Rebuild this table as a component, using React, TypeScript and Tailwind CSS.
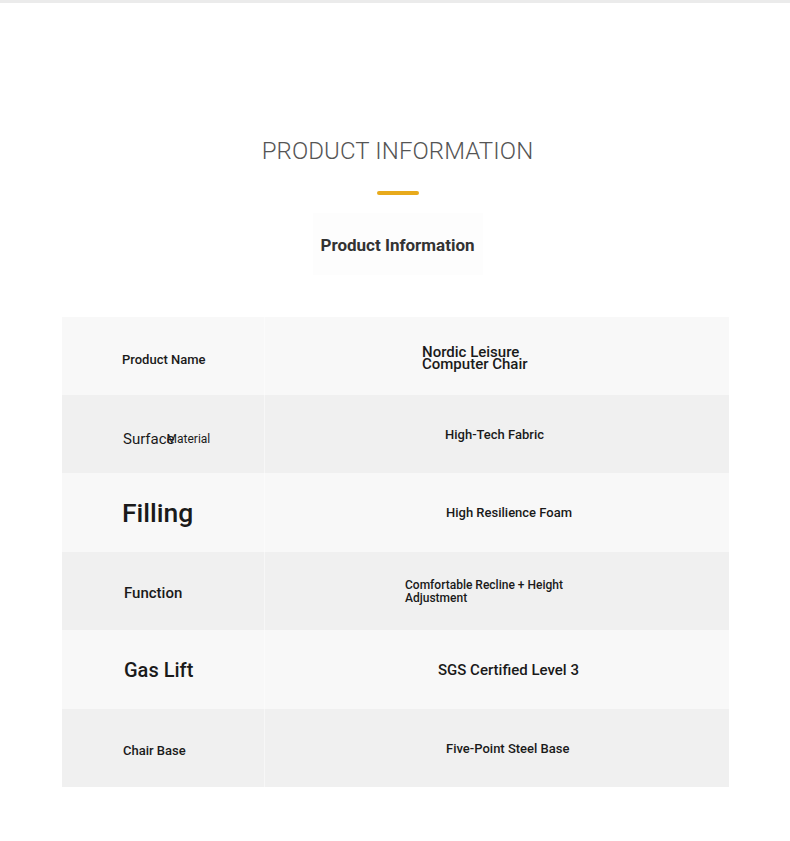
import React from "react";

export default function App() {
  return (
    <div className="w-[790px] min-h-[841px] bg-white font-['Roboto',sans-serif] text-[#222]">
      <div className="h-[3px] bg-[#ebebeb]" />
      <div className="flex flex-col items-center pt-[132px] pl-[5px]">
        <h1 className="text-[24px] leading-[32px] font-light text-[#555] tracking-[0.1px]">PRODUCT INFORMATION</h1>
        <div className="mt-[24px] h-[4px] w-[42px] rounded-full bg-[#e8aa1c]" />
        <div className="mt-[18px] w-[170px] h-[62px] flex items-center justify-center bg-[#fdfdfd] pt-[3px]">
          <span className="text-[17px] font-bold text-[#333]">Product Information</span>
        </div>
      </div>
      <div className="mt-[42px] mx-[62px] w-[667px] flex flex-col">
        {/* Row 1 */}
        <div className="flex h-[78px] bg-[#f8f8f8]">
          <div className="w-[203px] border-r border-[#fbfbfb] flex items-center pl-[60px] pt-[8px]">
            <span className="text-[13px] font-medium text-[#1a1a1a]">Product Name</span>
          </div>
          <div className="flex-1 flex items-center pl-[157px] pt-[3px]">
            <span className="text-[15px] font-medium leading-[12px] text-[#1a1a1a] w-[120px]">Nordic Leisure Computer Chair</span>
          </div>
        </div>
        {/* Row 2 */}
        <div className="flex h-[78px] bg-[#f0f0f0]">
          <div className="w-[203px] border-r border-[#f7f7f7] flex items-center pl-[61px] pt-[10px]">
            <span className="text-[15px] text-[#1a1a1a]">Surface</span>
            <span className="text-[12px] text-[#1a1a1a] -ml-[8px]">Material</span>
          </div>
          <div className="flex-1 flex items-center pl-[180px] pt-[2px]">
            <span className="text-[13px] font-medium text-[#1a1a1a]">High-Tech Fabric</span>
          </div>
        </div>
        {/* Row 3 */}
        <div className="flex h-[79px] bg-[#f8f8f8]">
          <div className="w-[203px] border-r border-[#fbfbfb] flex items-center pl-[60px]">
            <span className="text-[26.5px] font-medium text-[#1a1a1a]">Filling</span>
          </div>
          <div className="flex-1 flex items-center pl-[181px]">
            <span className="text-[13px] font-medium text-[#1a1a1a]">High Resilience Foam</span>
          </div>
        </div>
        {/* Row 4 */}
        <div className="flex h-[78px] bg-[#f0f0f0]">
          <div className="w-[203px] border-r border-[#f7f7f7] flex items-center pl-[62px] pt-[5px]">
            <span className="text-[15px] font-medium text-[#1a1a1a]">Function</span>
          </div>
          <div className="flex-1 flex items-center pl-[140px] pt-[1px]">
            <span className="text-[12px] font-medium leading-[13px] text-[#1a1a1a] w-[190px]">Comfortable Recline + Height Adjustment</span>
          </div>
        </div>
        {/* Row 5 */}
        <div className="flex h-[79px] bg-[#f8f8f8]">
          <div className="w-[203px] border-r border-[#fbfbfb] flex items-center pl-[62px] pt-[1px]">
            <span className="text-[20px] font-medium text-[#1a1a1a]">Gas Lift</span>
          </div>
          <div className="flex-1 flex items-center pl-[173px] pt-[1px]">
            <span className="text-[15px] font-medium text-[#1a1a1a]">SGS Certified Level 3</span>
          </div>
        </div>
        {/* Row 6 */}
        <div className="flex h-[78px] bg-[#f0f0f0]">
          <div className="w-[203px] border-r border-[#f7f7f7] flex items-center pl-[61px] pt-[6px]">
            <span className="text-[13px] font-medium text-[#1a1a1a]">Chair Base</span>
          </div>
          <div className="flex-1 flex items-center pl-[181px] pt-[1px]">
            <span className="text-[13px] font-medium text-[#1a1a1a]">Five-Point Steel Base</span>
          </div>
        </div>
      </div>
    </div>
  );
}
